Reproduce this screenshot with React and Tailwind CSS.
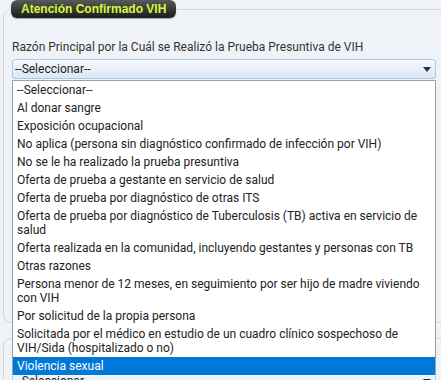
const options = [
  '--Seleccionar--',
  'Al donar sangre',
  'Exposición ocupacional',
  'No aplica (persona sin diagnóstico confirmado de infección por VIH)',
  'No se le ha realizado la prueba presuntiva',
  'Oferta de prueba a gestante en servicio de salud',
  'Oferta de prueba por diagnóstico de otras ITS',
  ['Oferta de prueba por diagnóstico de Tuberculosis (TB) activa en servicio de', 'salud'],
  'Oferta realizada en la comunidad, incluyendo gestantes y personas con TB',
  'Otras razones',
  ['Persona menor de 12 meses, en seguimiento por ser hijo de madre viviendo', 'con VIH'],
  'Por solicitud de la propia persona',
  ['Solicitada por el médico en estudio de un cuadro clínico sospechoso de', 'VIH/Sida (hospitalizado o no)'],
  'Violencia sexual',
]

function Arrow() {
  return (
    <svg width="8" height="5" viewBox="0 0 8 5" className="shrink-0">
      <path d="M0 0 H8 L4 5 Z" fill="#1f3550" />
    </svg>
  )
}

function Select({ className = '' }) {
  return (
    <div className={`flex h-[20px] items-center justify-between rounded-[3px] border border-[#a9cbee] bg-gradient-to-b from-[#f6f9fd] to-[#dbe7f4] pl-[2px] pr-[4px] text-[12px] text-[#222] ${className}`}>
      <span>--Seleccionar--</span>
      <Arrow />
    </div>
  )
}

export default function App() {
  return (
    <div className="relative h-[380px] w-[441px] overflow-hidden bg-[#eff3f7] font-['Roboto',sans-serif]">
      <fieldset className="ml-[3px] h-[323px] w-[460px] rounded-lg border border-[#d3d7dc] pl-[7px]">
        <legend className="h-[18px] rounded-md bg-gradient-to-b from-[#5a5a5a] to-[#1c1c1c] px-[10px] font-['Liberation_Sans',Arial,sans-serif] text-[12px] font-bold leading-[18px] text-[#d4fb3a] shadow-[0_1px_1px_rgba(0,0,0,0.3)]">
          Atención Confirmado VIH
        </legend>
        <div className="ml-px mt-[21px] w-[424px]">
          <div className="mb-[4px] text-[12px] leading-[16px] text-[#333]">
            Razón Principal por la Cuál se Realizó la Prueba Presuntiva de VIH
          </div>
          <Select />
        </div>
      </fieldset>

      <fieldset className="ml-[3px] mt-[15px] h-[80px] w-[460px] rounded-lg border border-[#d3d7dc] pl-[8px]">
        <div className="mt-[32px] w-[424px]">
          <Select />
        </div>
      </fieldset>

      <ul className="absolute left-[12px] top-[80px] w-[424px] border border-b-0 border-[#a0a0a0] bg-white text-[12px] leading-[14px] text-[#222]">
        {options.map((o, i) => {
          const selected = i === options.length - 1
          return (
            <li
              key={i}
              className={`whitespace-nowrap px-[4px] py-[2px] ${selected ? 'bg-[#0078d7] text-white' : ''}`}
            >
              {Array.isArray(o) ? (
                <>
                  {o[0]}
                  <br />
                  {o[1]}
                </>
              ) : (
                o
              )}
            </li>
          )
        })}
      </ul>
    </div>
  )
}
